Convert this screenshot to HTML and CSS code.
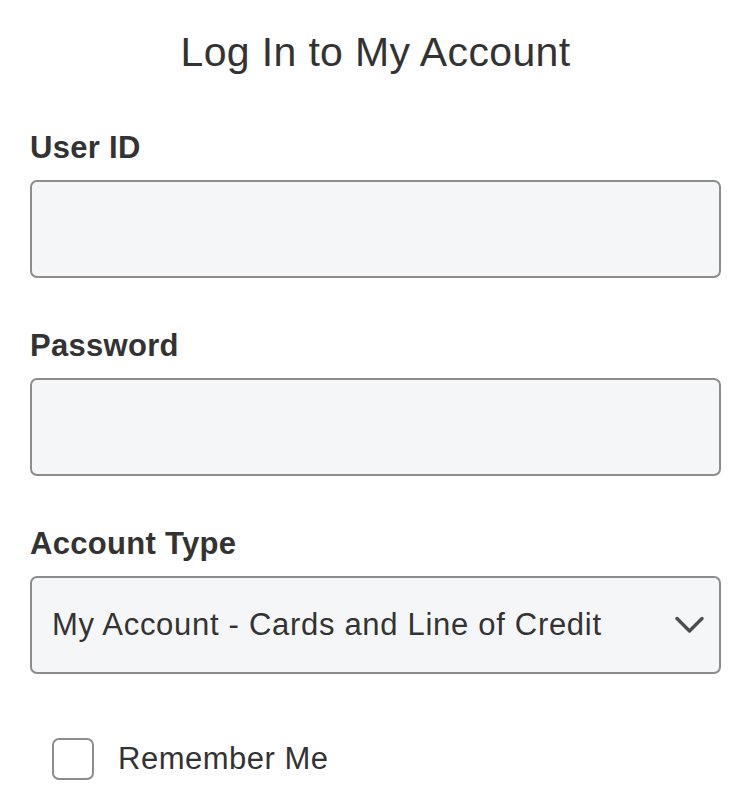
FILE: index.html
```html
<!DOCTYPE html>
<html lang="en">
<head>
<meta charset="utf-8">
<title>Log In to My Account</title>
<link rel="stylesheet" href="styles.css">
</head>
<body>
<main class="login">
  <h1 class="login-title">Log In to My Account</h1>
  <div class="field">
    <label class="field-label" for="uid">User ID</label>
    <input class="field-input" id="uid" type="text">
  </div>
  <div class="field">
    <label class="field-label" for="pwd">Password</label>
    <input class="field-input" id="pwd" type="password">
  </div>
  <div class="field">
    <label class="field-label" for="acct">Account Type</label>
    <div class="select">
      <span class="select-value">My Account - Cards and Line of Credit</span>
      <svg class="select-chevron" width="29" height="18" viewBox="0 0 29 18" aria-hidden="true">
        <path d="M2 2.5 L14.5 15 L27 2.5" fill="none" stroke="#4d4d4d" stroke-width="3.4" stroke-linecap="round" stroke-linejoin="round"/>
      </svg>
    </div>
  </div>
  <label class="remember">
    <span class="checkbox"></span>
    <span class="remember-text">Remember Me</span>
  </label>
</main>
</body>
</html>
```

FILE: styles.css
```css
* { box-sizing: border-box; }
html, body { margin: 0; padding: 0; background: #fff; }
body {
  font-family: "Liberation Sans", Arial, sans-serif;
  color: #333;
}
.login {
  padding: 28px 17px 0 30px;
  display: flex;
  flex-direction: column;
}
.login-title {
  margin: 0 0 55px;
  font-family: "Liberation Sans", Arial, sans-serif;
  font-weight: 400;
  font-size: 41px;
  line-height: 48px;
  letter-spacing: 0.35px;
  text-align: center;
  color: #333;
}
.field {
  display: flex;
  flex-direction: column;
  margin-bottom: 51px;
}
.field-label {
  font-weight: 700;
  font-size: 31px;
  line-height: 34px;
  letter-spacing: 0.3px;
  margin-bottom: 15px;
  color: #333;
}
.field-input, .select {
  height: 98px;
  border: 2px solid #8c8c8c;
  border-radius: 7px;
  background: #f5f6f8;
  width: 100%;
  font: inherit;
}
.select {
  display: flex;
  align-items: center;
  justify-content: space-between;
  padding: 0 15px 0 20px;
}
.select-value {
  font-size: 31px;
  letter-spacing: 0.7px;
  color: #333;
}
.select-chevron { display: block; }
.remember {
  display: flex;
  align-items: center;
  gap: 24px;
  margin-top: 13px;
  padding-left: 22px;
}
.checkbox {
  width: 42px;
  height: 42px;
  border: 2px solid #8c8c8c;
  border-radius: 7px;
  background: #fff;
}
.remember-text {
  font-size: 31px;
  letter-spacing: 0.5px;
  color: #333;
}
```
